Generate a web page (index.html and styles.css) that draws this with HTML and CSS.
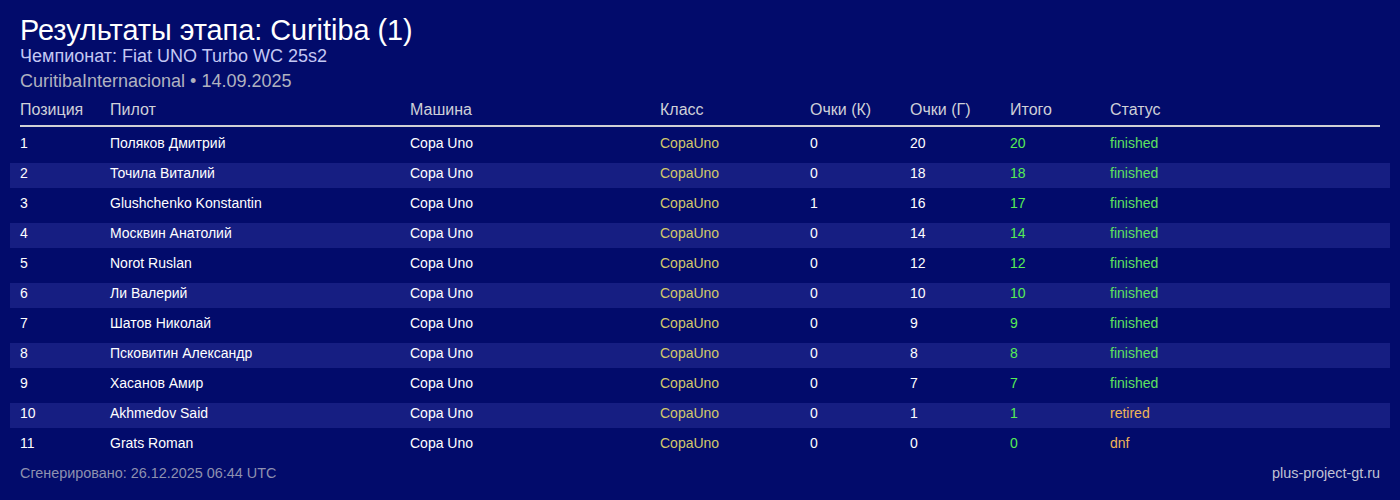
FILE: index.html
```html
<!DOCTYPE html>
<html lang="ru">
<head>
<meta charset="utf-8">
<title>Результаты этапа</title>
<link rel="stylesheet" href="styles.css">
</head>
<body>
<main class="page">
  <h1 class="title">Результаты этапа: Curitiba (1)</h1>
  <div class="subtitle">Чемпионат: Fiat UNO Turbo WC 25s2</div>
  <div class="meta">CuritibaInternacional • 14.09.2025</div>

  <div class="table">
    <div class="row head">
      <div>Позиция</div><div>Пилот</div><div>Машина</div><div>Класс</div><div>Очки (К)</div><div>Очки (Г)</div><div>Итого</div><div>Статус</div>
    </div>
    <div class="row"><div>1</div><div>Поляков Дмитрий</div><div>Copa Uno</div><div class="cls">CopaUno</div><div>0</div><div>20</div><div class="total">20</div><div class="ok">finished</div></div>
    <div class="row alt"><div>2</div><div>Точила Виталий</div><div>Copa Uno</div><div class="cls">CopaUno</div><div>0</div><div>18</div><div class="total">18</div><div class="ok">finished</div></div>
    <div class="row"><div>3</div><div>Glushchenko Konstantin</div><div>Copa Uno</div><div class="cls">CopaUno</div><div>1</div><div>16</div><div class="total">17</div><div class="ok">finished</div></div>
    <div class="row alt"><div>4</div><div>Москвин Анатолий</div><div>Copa Uno</div><div class="cls">CopaUno</div><div>0</div><div>14</div><div class="total">14</div><div class="ok">finished</div></div>
    <div class="row"><div>5</div><div>Norot Ruslan</div><div>Copa Uno</div><div class="cls">CopaUno</div><div>0</div><div>12</div><div class="total">12</div><div class="ok">finished</div></div>
    <div class="row alt"><div>6</div><div>Ли Валерий</div><div>Copa Uno</div><div class="cls">CopaUno</div><div>0</div><div>10</div><div class="total">10</div><div class="ok">finished</div></div>
    <div class="row"><div>7</div><div>Шатов Николай</div><div>Copa Uno</div><div class="cls">CopaUno</div><div>0</div><div>9</div><div class="total">9</div><div class="ok">finished</div></div>
    <div class="row alt"><div>8</div><div>Псковитин Александр</div><div>Copa Uno</div><div class="cls">CopaUno</div><div>0</div><div>8</div><div class="total">8</div><div class="ok">finished</div></div>
    <div class="row"><div>9</div><div>Хасанов Амир</div><div>Copa Uno</div><div class="cls">CopaUno</div><div>0</div><div>7</div><div class="total">7</div><div class="ok">finished</div></div>
    <div class="row alt"><div>10</div><div>Akhmedov Said</div><div>Copa Uno</div><div class="cls">CopaUno</div><div>0</div><div>1</div><div class="total">1</div><div class="bad">retired</div></div>
    <div class="row"><div>11</div><div>Grats Roman</div><div>Copa Uno</div><div class="cls">CopaUno</div><div>0</div><div>0</div><div class="total">0</div><div class="bad">dnf</div></div>
  </div>

  <footer class="footer">
    <span class="gen">Сгенерировано: 26.12.2025 06:44 UTC</span>
    <span class="site">plus-project-gt.ru</span>
  </footer>
</main>
</body>
</html>
```

FILE: styles.css
```css
html, body {
  margin: 0;
  padding: 0;
  background: #020b6b;
}

body {
  font-family: "Liberation Sans", Arial, sans-serif;
  color: #ffffff;
  width: 1400px;
  height: 500px;
  overflow: hidden;
}

.page {
  padding: 15px 20px 0 20px;
}

.title {
  margin: 0 0 1px 0;
  font-size: 28.8px;
  line-height: 30px;
  font-weight: normal;
  color: #ffffff;
}

.subtitle {
  font-size: 18px;
  line-height: 20px;
  color: #c4c8f4;
}

.meta {
  margin-top: 5px;
  font-size: 18px;
  line-height: 20px;
  color: #b0b2c0;
}

.table {
  margin-top: 8px;
  display: flex;
  flex-direction: column;
}

.row {
  display: grid;
  grid-template-columns: 90px 300px 250px 150px 100px 100px 100px 1fr;
  font-size: 14px;
  line-height: 20px;
  height: 25px;
  box-sizing: border-box;
  padding: 0 10px 5px 10px;
  margin: 0 -10px 5px -10px;
  white-space: nowrap;
}

.row.head {
  margin: 0 0 6px 0;
  padding: 0 0 5px 0;
  height: 28px;
  font-size: 16px;
  line-height: 21px;
  color: #cfd0d8;
  border-bottom: 2px solid #d0d0d4;
}

.row.alt {
  background: #161e82;
}

.cls {
  color: #d2c86a;
}

.total {
  color: #55ee55;
}

.ok {
  color: #5ee25e;
}

.bad {
  color: #efb457;
}

.footer {
  display: flex;
  justify-content: space-between;
  font-size: 14.4px;
  line-height: 20px;
  color: #8e91b0;
}

.footer .site {
  color: #c0c2d4;
}
```
